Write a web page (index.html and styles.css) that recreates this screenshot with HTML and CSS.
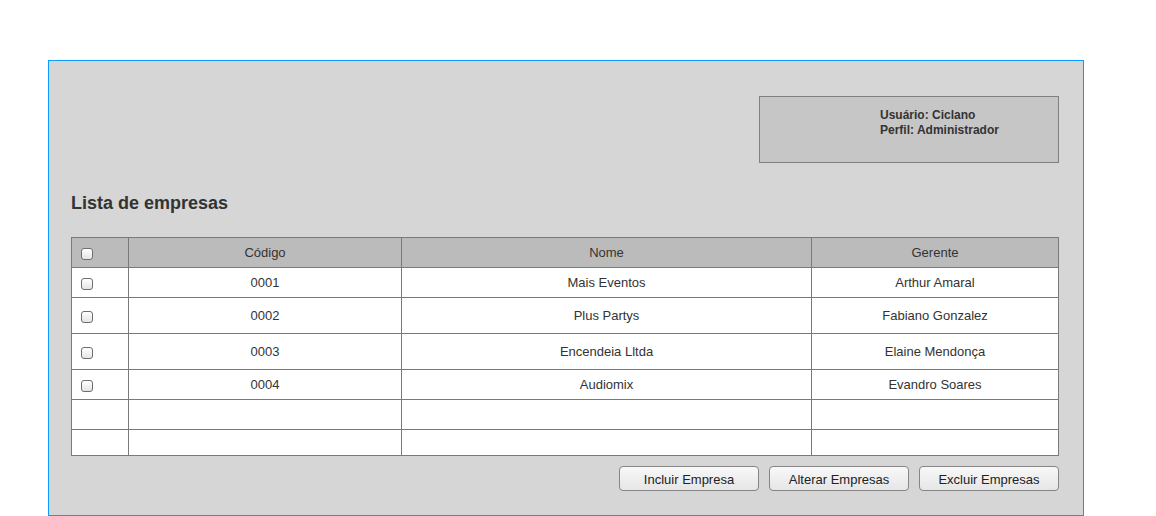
FILE: index.html
```html
<!DOCTYPE html>
<html lang="pt">
<head>
<meta charset="utf-8">
<title>Lista de empresas</title>
<link rel="stylesheet" href="styles.css">
</head>
<body>
<div class="frame">
  <div class="userbox">
    <div class="userinfo">Usuário: Ciclano<br>Perfil: Administrador</div>
  </div>
  <h1 class="title">Lista de empresas</h1>
  <table class="grid">
    <colgroup>
      <col class="c-check"><col class="c-code"><col class="c-name"><col class="c-mgr">
    </colgroup>
    <thead>
      <tr class="r30"><th class="chk"><input type="checkbox" class="cb"></th><th>Código</th><th>Nome</th><th>Gerente</th></tr>
    </thead>
    <tbody>
      <tr class="r30"><td class="chk"><input type="checkbox" class="cb"></td><td>0001</td><td>Mais Eventos</td><td>Arthur Amaral</td></tr>
      <tr class="r36"><td class="chk"><input type="checkbox" class="cb"></td><td>0002</td><td>Plus Partys</td><td>Fabiano Gonzalez</td></tr>
      <tr class="r36"><td class="chk"><input type="checkbox" class="cb"></td><td>0003</td><td>Encendeia Lltda</td><td>Elaine Mendonça</td></tr>
      <tr class="r30"><td class="chk"><input type="checkbox" class="cb"></td><td>0004</td><td>Audiomix</td><td>Evandro Soares</td></tr>
      <tr class="r30"><td></td><td></td><td></td><td></td></tr>
      <tr class="r26"><td></td><td></td><td></td><td></td></tr>
    </tbody>
  </table>
  <div class="actions">
    <button class="btn">Incluir Empresa</button>
    <button class="btn">Alterar Empresas</button>
    <button class="btn">Excluir Empresas</button>
  </div>
</div>
</body>
</html>
```

FILE: styles.css
```css
html, body {
  margin: 0;
  padding: 0;
  background: #ffffff;
}
body {
  font-family: "Liberation Sans", Arial, Helvetica, sans-serif;
  color: #333333;
}
.frame {
  margin: 60px 0 0 48px;
  border: 1px solid #0a9cff;
  background: #d6d6d6;
  padding: 35px 24px 0 22px;
  box-sizing: border-box;
  width: 1036px;
  height: 456px;
  display: flex;
  flex-direction: column;
}
.userbox {
  align-self: flex-end;
  width: 300px;
  height: 67px;
  box-sizing: border-box;
  border: 1px solid #808080;
  background: #c6c6c6;
  padding: 11px 0 0 120px;
}
.userinfo {
  font-size: 12px;
  font-weight: bold;
  line-height: 15px;
  color: #333333;
}
.title {
  margin: 29px 0 0 0;
  font-size: 18px;
  line-height: 22px;
  font-weight: bold;
  color: #333333;
}
.grid {
  margin-top: 23px;
  width: 987px;
  border-collapse: collapse;
  table-layout: fixed;
  font-size: 13px;
  color: #333333;
}
.c-check { width: 57px; }
.c-code { width: 273px; }
.c-name { width: 410px; }
.c-mgr { width: 247px; }
.grid th, .grid td {
  border: 1px solid #7a7a7a;
  padding: 0;
  text-align: center;
  vertical-align: middle;
  font-weight: normal;
  background: #ffffff;
}
.grid th {
  background: #bbbbbb;
}
.grid .chk {
  text-align: left;
  padding-left: 9px;
}
.r30 { height: 30px; }
.r36 { height: 36px; }
.r26 { height: 26px; }
.cb {
  appearance: none;
  -webkit-appearance: none;
  width: 12px;
  height: 12px;
  margin: 3px 0 0 0;
  border: 1px solid #6e6e6e;
  border-radius: 3px;
  background: linear-gradient(#ffffff, #e4e4e4);
  display: block;
}
.actions {
  margin-top: 10px;
  display: flex;
  justify-content: flex-end;
  gap: 10px;
}
.btn {
  width: 140px;
  height: 25px;
  border: 1px solid #858585;
  border-radius: 4px;
  background: linear-gradient(#f8f8f8, #e6e6e6);
  font-family: "Liberation Sans", Arial, Helvetica, sans-serif;
  font-size: 13px;
  color: #222222;
  padding: 2px 0 0 0;
}
```
